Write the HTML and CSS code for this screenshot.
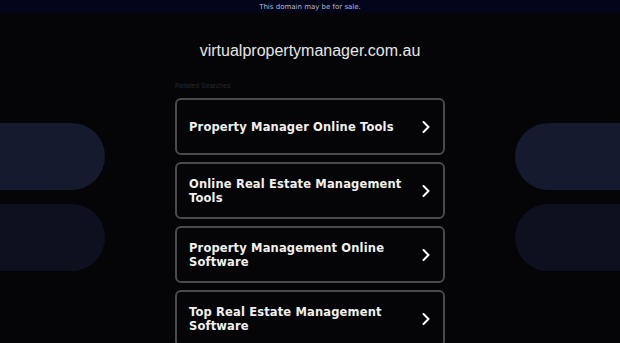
FILE: index.html
```html
<!DOCTYPE html>
<html>
<head>
<meta charset="utf-8">
<link rel="stylesheet" href="styles.css">
</head>
<body>
<div class="deco deco-l1"></div>
<div class="deco deco-l2"></div>
<div class="deco deco-r1"></div>
<div class="deco deco-r2"></div>
<div class="topbar">This domain may be for sale.</div>
<h1 class="domain">virtualpropertymanager.com.au</h1>
<main class="related">
  <div class="label">Related Searches</div>
  <a class="item" href="#"><span>Property Manager Online Tools</span><svg class="chev" viewBox="0 0 8 12" width="8" height="12"><path d="M1.5 1 L6.5 6 L1.5 11" fill="none" stroke="#fff" stroke-width="2" stroke-linecap="round" stroke-linejoin="round"/></svg></a>
  <a class="item" href="#"><span>Online Real Estate Management Tools</span><svg class="chev" viewBox="0 0 8 12" width="8" height="12"><path d="M1.5 1 L6.5 6 L1.5 11" fill="none" stroke="#fff" stroke-width="2" stroke-linecap="round" stroke-linejoin="round"/></svg></a>
  <a class="item" href="#"><span>Property Management Online Software</span><svg class="chev" viewBox="0 0 8 12" width="8" height="12"><path d="M1.5 1 L6.5 6 L1.5 11" fill="none" stroke="#fff" stroke-width="2" stroke-linecap="round" stroke-linejoin="round"/></svg></a>
  <a class="item" href="#"><span>Top Real Estate Management Software</span><svg class="chev" viewBox="0 0 8 12" width="8" height="12"><path d="M1.5 1 L6.5 6 L1.5 11" fill="none" stroke="#fff" stroke-width="2" stroke-linecap="round" stroke-linejoin="round"/></svg></a>
</main>
</body>
</html>
```
FILE: styles.css
```css
html, body {
  margin: 0;
  padding: 0;
  background: #050508;
  height: 343px;
  overflow: hidden;
}
body {
  position: relative;
  font-family: "DejaVu Sans", Verdana, sans-serif;
}
.deco {
  position: absolute;
  height: 67px;
  width: 105px;
  z-index: 0;
}
.deco-l1, .deco-l2 { left: 0; border-radius: 0 34px 34px 0; }
.deco-r1, .deco-r2 { right: 0; border-radius: 34px 0 0 34px; }
.deco-l1, .deco-r1 { top: 123px; background: #161a2e; }
.deco-l2, .deco-r2 { top: 204px; background: #0e1020; }
.topbar {
  position: relative;
  z-index: 1;
  height: 13px;
  line-height: 14px;
  background: #03041a;
  color: #b8bcd0;
  font-size: 7px;
  text-align: center;
}
.domain {
  position: relative;
  z-index: 1;
  margin: 28px 0 0;
  font-family: "Liberation Sans", Arial, sans-serif;
  font-weight: normal;
  font-size: 16px;
  line-height: 20px;
  color: #e6e6e6;
  text-align: center;
}
.related {
  position: relative;
  z-index: 1;
  width: 270px;
  margin: 20px auto 0;
  display: flex;
  flex-direction: column;
  gap: 7px;
}
.label {
  font-family: "Liberation Sans", Arial, sans-serif;
  font-size: 7px;
  line-height: 10px;
  color: #262630;
  margin-bottom: 0;
}
.item {
  box-sizing: border-box;
  height: 57px;
  border: 2px solid #4a4a4e;
  border-radius: 6px;
  background: #050508;
  display: flex;
  align-items: center;
  justify-content: space-between;
  padding: 0 11px 0 12px;
  text-decoration: none;
  color: #f0f0f0;
  font-weight: bold;
  font-size: 11.5px;
  line-height: 14px;
  letter-spacing: 0.15px;
}
.item span { max-width: 225px; }
.chev { flex: none; margin-right: 2px; }
```
